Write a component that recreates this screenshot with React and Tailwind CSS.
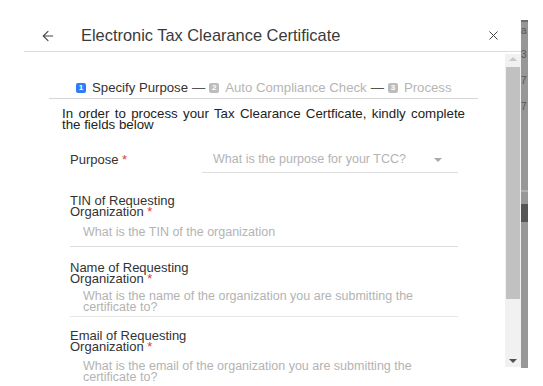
import React from 'react';
import { ArrowLeft, X } from 'lucide-react';

const Label = ({ children }) => (
  <div className="text-[13px] leading-[11px] text-[#333]">
    {children}
    <span className="text-[#e53935]"> *</span>
  </div>
);

const Step = ({ n, text, active }) => (
  <div className="flex items-center">
    <span
      className={`flex h-[10px] w-[10px] items-center justify-center rounded-[2px] text-[8px] font-bold leading-none text-white ${
        active ? 'bg-[#2f7cf6]' : 'bg-[#bdbdbd]'
      }`}
    >
      {n}
    </span>
    <span className={`ml-[6px] ${active ? 'text-[#333]' : 'text-[#b5b5b5]'}`}>{text}</span>
  </div>
);

const App = () => {
  return (
    <div className="flex h-[386px] w-[543px] overflow-hidden bg-white font-['Liberation_Sans',Arial,sans-serif]">
      {/* dialog */}
      <div className="flex w-[521px] flex-col">
        {/* header */}
        <div className="ml-[24px] mt-[20px] flex h-[32px] items-center border-b border-[#dcdcdc] pl-[16px] pr-[20px]">
          <ArrowLeft className="h-[16px] w-[16px] text-[#444]" strokeWidth={1.6} />
          <div className="ml-[25px] flex-1 text-[16.4px] text-[#3a3a3a]">Electronic Tax Clearance Certificate</div>
          <X className="h-[15px] w-[15px] text-[#444]" strokeWidth={1.6} />
        </div>

        <div className="flex flex-1">
          {/* content */}
          <div className="flex-1 overflow-hidden">
            <div className="ml-[49px] mt-[26px] flex h-[21px] w-[429px] items-center gap-[4px] border-b border-[#d6d6d6] pl-[27px] text-[13.2px]">
              <Step n="1" text="Specify Purpose" active />
              <span className="text-[#555]">—</span>
              <Step n="2" text="Auto Compliance Check" />
              <span className="text-[#555]">—</span>
              <Step n="3" text="Process" />
            </div>

            <p className="ml-[62px] mt-[10px] w-[403px] text-justify text-[13.3px] leading-[10.5px] text-[#222]">
              In order to process your Tax Clearance Certficate, kindly complete the fields below
            </p>

            <div className="ml-[70px] w-[388px]">
              {/* purpose */}
              <div className="mt-[17px] flex h-[26px] items-center">
                <div className="w-[132px] text-[13px] text-[#333]">
                  Purpose<span className="text-[#e53935]"> *</span>
                </div>
                <div className="flex h-[26px] flex-1 items-center border-b border-[#dedede] pl-[11px] pr-[16px] text-[12.5px] text-[#b3b3b3]">
                  <span className="flex-1">What is the purpose for your TCC?</span>
                  <span className="h-0 w-0 border-l-[4px] border-r-[4px] border-t-[4px] border-l-transparent border-r-transparent border-t-[#aaa]" />
                </div>
              </div>

              {/* TIN */}
              <div className="mt-[22px]">
                <Label>
                  TIN of Requesting
                  <br />
                  Organization
                </Label>
                <div className="border-b border-[#dedede] pb-[8px] pl-[13px] pt-[9px] text-[12.5px] leading-[12px] text-[#b3b3b3]">
                  What is the TIN of the organization
                </div>
              </div>

              {/* name */}
              <div className="mt-[15px]">
                <Label>
                  Name of Requesting
                  <br />
                  Organization
                </Label>
                <div className="border-b border-[#e6e6e6] pb-[3px] pl-[13px] pt-[7px] text-[12.5px] leading-[11px] text-[#b3b3b3]">
                  What is the name of the organization you are submitting the
                  <br />
                  certificate to?
                </div>
              </div>

              {/* email */}
              <div className="mt-[13px]">
                <Label>
                  Email of Requesting
                  <br />
                  Organization
                </Label>
                <div className="pl-[13px] pt-[9px] text-[12.5px] leading-[11px] text-[#b3b3b3]">
                  What is the email of the organization you are submitting the
                  <br />
                  certificate to?
                </div>
              </div>
            </div>
          </div>

          {/* scrollbar */}
          <div className="mt-[2px] flex h-[313px] w-[16px] flex-col items-center bg-[#f1f1f1]">
            <span className="mt-[3px] h-0 w-0 border-b-[4px] border-l-[4px] border-r-[4px] border-b-[#c8c8c8] border-l-transparent border-r-transparent" />
            <div className="mt-[6px] h-[232px] w-[14px] bg-[#c1c1c1]" />
            <div className="flex-1" />
            <span className="mb-[4px] h-0 w-0 border-l-[4px] border-r-[4px] border-t-[4px] border-l-transparent border-r-transparent border-t-[#505050]" />
          </div>
        </div>
      </div>

      {/* page behind the dialog */}
      <div className="mt-[20px] flex h-[348px] w-[7px] flex-col bg-[#979797] text-[10px] leading-none text-[#555]">
        <div className="h-[2px] bg-[#6e6e6e]" />
        <div className="mt-[4px]">a</div>
        <div className="mt-[14px]">3</div>
        <div className="mt-[16px]">7</div>
        <div className="mt-[16px]">7</div>
        <div className="mt-[78px] h-[2px] bg-[#b0b0b0]" />
        <div className="mt-[12px] h-[18px] bg-[#555]" />
      </div>
      <div className="flex-1 bg-white" />
    </div>
  );
};

export default App;
